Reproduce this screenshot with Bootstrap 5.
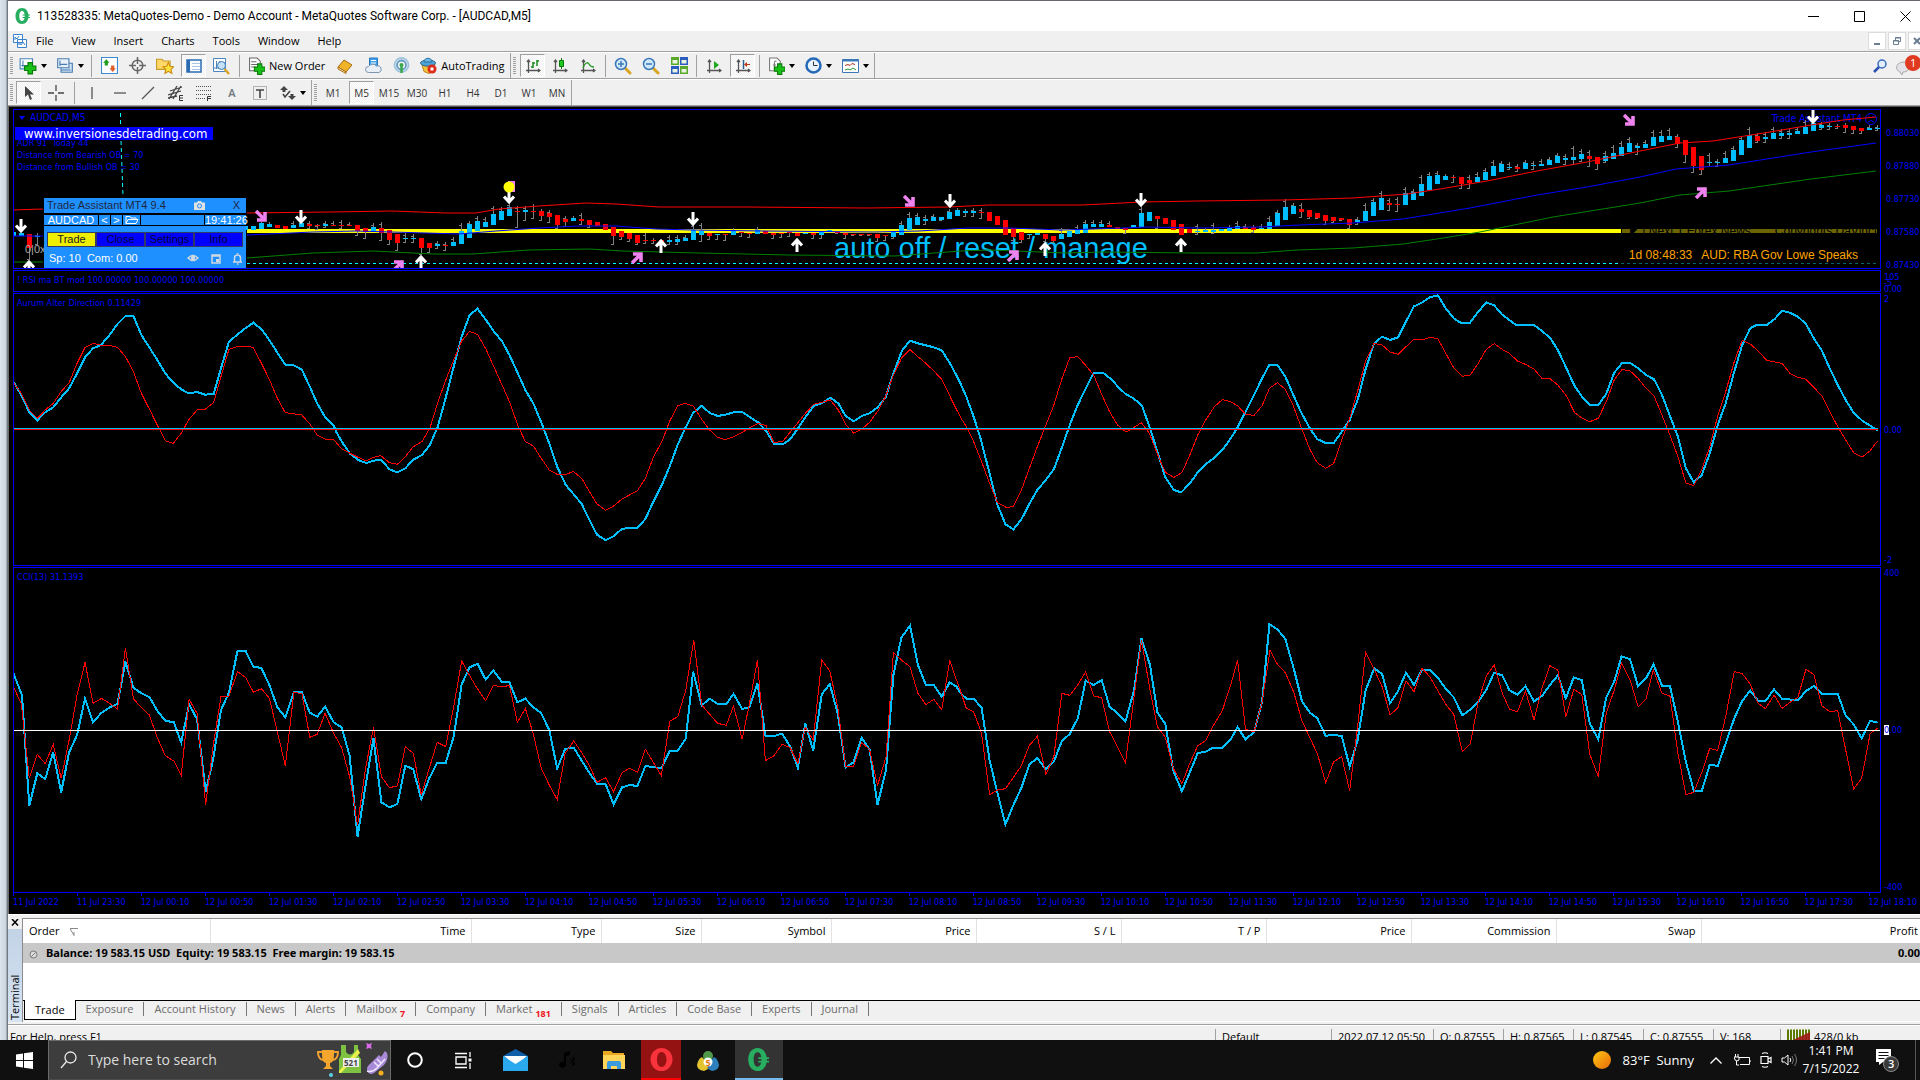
<!DOCTYPE html>
<html lang="en">
<head>
<meta charset="utf-8">
<meta name="viewport" content="width=device-width, initial-scale=1">
<title>MetaQuotes-Demo - AUDCAD,M5</title>
<link href="https://cdn.jsdelivr.net/npm/bootstrap@5.3.0/dist/css/bootstrap.min.css" rel="stylesheet">
<style>
  body{font-family:"Open Sans","Noto Sans",sans-serif;font-size:12px;line-height:16px;color:#000;background:#101010}
  button{font:inherit;color:inherit;background:none;border:0;padding:0}
  svg{display:block;flex:none}
  .ui{font-size:11px}
  .desk-edge{width:8px;background:linear-gradient(90deg,#dbe4ed,#cdd6df 70%,#6f757c 95%)}
  .app{background:#f0f0f0;border-top:1px solid #666a70;min-width:0}
  .workspace{min-height:0}
  .titlebar{height:30px;background:#fff;padding-left:7px}
  .titlebar .caption{gap:6px;font-family:Roboto,"Open Sans",sans-serif}
  .winbtn{width:46px;height:30px}
  .winbtn:last-child{margin-right:-8px}
  .menubar{height:21px;border-bottom:1px solid #a0a0a0;padding-left:5px}
  .menubar a{color:#000;text-decoration:none;padding:0 9px}
  .mdi{gap:2px;margin-right:-6px}
  .mdi button{width:18px;height:18px;background:#fff;border:1px solid #dcdcdc}
  .tb{height:27px;border-bottom:1px solid #a0a0a0;border-top:1px solid #fff}
  .tb-group{height:26px;border-right:1px solid #a0a0a0;padding-left:6px;position:relative}
  .tb-group::before{content:"";position:absolute;left:2px;top:4px;width:3px;height:18px;background:repeating-linear-gradient(#a0a0a0 0 1px,#f0f0f0 1px 2px)}
  .tb-group+.tb-group{padding-left:7px}
  .tool{width:28px;height:26px;display:flex;align-items:center;justify-content:center}
  .tool.wide{width:37px;gap:4px}
  .tool.pressed{background:conic-gradient(#fff 25%,#f0f0f0 0 50%,#fff 0 75%,#f0f0f0 0) 0 0/2px 2px;border:1px solid #a0a0a0;border-right-color:#fff;border-bottom-color:#fff;width:25px;height:23px;margin:0 1px 0 2px}
  .caret{border:3px solid transparent;border-top:4px solid #000;border-bottom:0}
  .caret.blue{border-top-color:#00f}
  .vsep{width:1px;height:22px;background:#a0a0a0;margin:0 3px}
  .tf{font-size:10px;color:#333}
  .labelled{gap:4px;padding:0 6px 0 5px}
  .chartwin{background:#000;border-left:1px solid #6d6d6d;padding:2px 0 0 4px;min-height:0;color:#00f;font:9px/12px "DejaVu Sans Condensed","DejaVu Sans",sans-serif;border-top:1px solid #555}
  .panes{gap:1px;min-height:0}
  .pane{min-height:0;flex-basis:0}
  .pane-price{flex-grow:160}
  .pane-rsi{flex-grow:22}
  .pane-aurum{flex-grow:273}
  .pane-cci{flex-grow:326}
  .plot{border:1px solid #00f;position:relative;min-width:0;min-height:0}
  .plot svg.draw{position:absolute;inset:0;width:100%;height:100%}
  .scale{width:39px;flex:none;padding-left:3px;position:relative;z-index:1;min-height:0;white-space:nowrap}
  .scale.prices{padding-top:8px}
  .scale.prices span{flex:0 0 33px;line-height:33px;padding-left:2px}
  .scale.tight{padding-top:4px}
  .scale.tight span{line-height:6px}
  .pane-title{position:absolute;left:3px;top:3px}
  .chart-head{position:absolute;left:5px;top:1px}
  .chart-head .sym{font-size:10px;line-height:14px;gap:5px}
  .site{background:#00f;color:#fff;font-size:13px;line-height:13px;width:198px;padding-left:9px;margin:2px 0 0 -4px}
  .notes{margin:-3px 0 0 -2px}
  .times{height:21px}
  .times span{flex:0 0 3.356%;white-space:nowrap;padding-top:3px;position:relative}
  .times span::before{content:"";position:absolute;left:0;top:0;width:1px;height:3px;background:#00f}
  .banner{position:absolute;left:820px;bottom:4px;font:29px/32px "Liberation Sans",Arial,sans-serif;color:#00bfff;white-space:nowrap}
  .news{position:absolute;right:22px;bottom:5px;font:12px/16px "Liberation Sans",Arial,sans-serif;color:#ffa500;gap:9px}
  .newsbar{position:absolute;right:3px;top:119px;width:255px;height:4px;background:#6b6400;color:#000;overflow:hidden;white-space:nowrap;font:12px/13px "Liberation Sans",Arial,sans-serif;padding:0 0 0 8px}
  .newsbar span{margin-top:-4px}
  .ea-name{position:absolute;right:3px;top:2px;gap:3px;font-size:10px;line-height:14px}
  .assist{position:absolute;left:30px;bottom:0;width:202px;height:70px;background:#1e90ff;font:11px/15px "Liberation Sans",Arial,sans-serif;color:#202840}
  .assist .a-title{height:15px;padding:0 6px 0 3px}
  .assist .a-row{height:13px;border:solid #000;border-width:2px 0 1px;color:#fff;line-height:10px;background:#000;gap:1px}
  .a-row>*{background:#1e90ff;height:10px;color:#fff;text-align:center}
  .a-row .pair{width:54px}
  .a-row .step{width:11px}
  .a-row .open{width:17px}
  .a-row .now{width:41px}
  .assist .a-tabs{margin-top:6px;padding:0 3px;height:15px}
  .a-tabs button{background:#00f;border:1px solid #333a66;flex:1;height:15px;line-height:13px;color:#000038}
  .a-tabs button.on{background:#eeee00;color:#222}
  .assist .a-foot{color:#fff;padding:4px 4px 0 5px}
  .terminal{height:108px;border-top:1px solid #fff}
  .term-side{width:16px;padding:4px 0 0 0}
  .term-grip{width:14px;background:linear-gradient(#d5e3f2,#c3d3e6);writing-mode:vertical-rl;transform:rotate(180deg);padding-top:2px;line-height:14px;margin-top:3px}
  .term-body{border-left:1px solid #8d8d8d;border-top:1px solid #8d8d8d;margin-top:3px;background:#fff;min-width:0}
  .term-gap{height:3px;border-bottom:1px solid #a0a0a0}
  .orders{table-layout:fixed;width:100%;border-collapse:collapse}
  .orders th{height:24px;font-weight:400;text-align:right;padding:0 5px 0 6px;border-right:1px solid #e2e2e2}
  .orders th:first-child{text-align:left}
  .orders th:last-child{border:0;padding-right:2px}
  .orders td{height:20px;background:#c8c8c8;font-family:"Noto Sans","Open Sans",sans-serif;font-weight:700;padding:0 0 0 6px}
  .c-order{width:187px}.c-time{width:261px}.c-type,.c-symbol{width:130px}.c-size{width:100px}.c-val{width:145px}
  .tabs{background:#f0f0f0;border-top:1px solid #000;height:22px;color:#6d6d6d;font-size:11px;border-bottom:1px solid #fff}
  .tabs button{padding:0 10px;height:17px;position:relative;line-height:17px}
  .tabs button+button{border-right:1px solid #777;height:14px;line-height:14px;margin-top:1px}
  .tabs button.cur{background:#fff;color:#000;border:1px solid #000;border-top:0;height:20px;margin:-1px 0 0 1px;padding:0 10px 1px}
  .tabs sub{color:#f01020;font-weight:700;font-size:9px;bottom:-4px;margin-left:3px;line-height:0}
  .status{height:15px;overflow:hidden;border-top:1px solid #fff;padding:3px 0 0 2px;font-size:11px;line-height:16px}
  .status span{border-left:1px solid #a0a0a0;padding-left:6px;height:16px;flex:none;white-space:nowrap}
  .s-profile{width:116px}.s-date{width:102px}.s-price{width:70px}.s-vol{width:67px}.s-net{width:140px}
  .taskbar{height:40px;background:#101010;color:#fff;font-size:13px}
  .task{width:48px;height:40px;display:flex;align-items:center;justify-content:center}
  .task.narrow{width:46px}
  .searchbox{width:343px;height:40px;background:#3d3d3d;border:1px solid #6b6b6b;border-bottom-color:#4a4a4a;padding:0 0 0 11px;gap:11px}
  .searchbox input{background:none;border:0;color:#e4e4e4;font-size:14px;min-width:0;outline:0;padding:0}
  .searchbox input::placeholder{color:#dcdcdc;opacity:1}
  .task.opera{width:40px;background:#941212;border-bottom:2px solid #f00}
  .task.mt5{width:54px}
  .task.mt{background:#333;border-bottom:2px solid #76b9ed}
  .clock{font-size:12px;line-height:18px;width:64px}
  .peek{width:1px;height:40px;background:#555;margin:0 4px 0 0}
</style>
<script src="https://cdn.jsdelivr.net/npm/bootstrap@5.3.0/dist/js/bootstrap.bundle.min.js"></script>
</head>
<body class="vh-100 d-flex flex-column overflow-hidden">
<svg width="0" height="0" class="position-absolute">
  <defs>
    <symbol id="logo" viewBox="0 0 16 16"><path fill="#27ae60" fill-rule="evenodd" d="M7 0c4 0 6.500 3.500 6.500 8S11 16 7 16 .5 12.500.5 8 3 0 7 0zm0 3C5 3 4.300 5.500 4.300 8S5 13 7 13s2.700-2.500 2.700-5S9 3 7 3z"/><path stroke="#27ae60" stroke-width="1.200" d="M7.500 7h7.500M7.500 9.500h7.500"/></symbol>
    <symbol id="plus" viewBox="0 0 16 16"><path fill="#18c018" stroke="#0a7a0a" d="M8 5h4v3h3v4h-3v3H8v-3H5V8h3z"/></symbol>
    <symbol id="axes" viewBox="0 0 16 16"><path fill="none" stroke="#555" stroke-width="1.300" d="M3.500 2v13M1 12.500h14M2 4l1.500-2L5 4M13 11l2 1.500-2 1.500"/></symbol>
    <symbol id="glass" viewBox="0 0 18 18"><path stroke="#d9a520" stroke-width="3" stroke-linecap="round" d="M11 11l5 5"/><circle cx="7" cy="7" r="5.500" fill="#cfe8fa" stroke="#3b78b8" stroke-width="1.500"/></symbol>
    <symbol id="down" viewBox="0 0 12 14"><path fill="none" stroke="#fff" stroke-width="3" d="M6 0v12M1 6.500l5 5.500 5-5.500"/></symbol>
    <symbol id="up" viewBox="0 0 12 14"><path fill="none" stroke="#fff" stroke-width="3" d="M6 14V2M1 7.500L6 2l5 5.500"/></symbol>
    <symbol id="se" viewBox="0 0 12 12"><path fill="none" stroke="#ee82ee" stroke-width="3.600" d="M1 1l8 8M10 2v8H2"/></symbol>
    <symbol id="ne" viewBox="0 0 12 12"><path fill="none" stroke="#ee82ee" stroke-width="3.600" d="M1 11l8-8M10 10V2H2"/></symbol>
  </defs>
</svg>

<div class="workspace d-flex flex-grow-1">
  <div class="desk-edge flex-shrink-0"></div>
  <div class="app flex-grow-1 d-flex flex-column">

    <header class="titlebar d-flex justify-content-between align-items-center">
      <div class="caption d-flex align-items-center">
        <svg width="16" height="16"><use href="#logo"/></svg>
        <span>113528335: MetaQuotes-Demo - Demo Account - MetaQuotes Software Corp. - [AUDCAD,M5]</span>
      </div>
      <div class="d-flex">
        <button class="winbtn d-flex align-items-center justify-content-center" aria-label="Minimize"><svg width="11" height="11"><path stroke="#000" d="M0 5.500h11"/></svg></button>
        <button class="winbtn d-flex align-items-center justify-content-center" aria-label="Maximize"><svg width="11" height="11"><path fill="none" stroke="#000" d="M.5.5h10v10H.5z"/></svg></button>
        <button class="winbtn d-flex align-items-center justify-content-center" aria-label="Close"><svg width="11" height="11"><path stroke="#000" d="M.5.5l10 10M10.500.5l-10 10"/></svg></button>
      </div>
    </header>

    <nav class="menubar ui d-flex align-items-center justify-content-between">
      <div class="d-flex align-items-center">
        <svg width="14" height="14" viewBox="0 0 14 14"><path fill="#fff" stroke="#3a80cc" d="M.5.5h9v8h-9zM4.500 5.500h9v8h-9z"/><path fill="none" stroke="#3a80cc" d="M2 6V3l2 2 2-3M6 11V8l2 3 2-3 2 3"/></svg>
        <a href="#">File</a><a href="#">View</a><a href="#">Insert</a><a href="#">Charts</a><a href="#">Tools</a><a href="#">Window</a><a href="#">Help</a>
      </div>
      <div class="mdi d-flex">
        <button aria-label="Minimize chart"><svg width="16" height="16"><path stroke="#6b7d92" stroke-width="2" d="M5 11h6"/></svg></button>
        <button aria-label="Restore chart"><svg width="16" height="16"><path fill="none" stroke="#6b7d92" d="M4.500 7.500h5v4h-5zM6.500 7V4.500h5v4H10M4 8h6M6 5h6"/></svg></button>
        <button aria-label="Close chart"><svg width="16" height="16"><path stroke="#6b7d92" stroke-width="2" d="M5 5l6 6M11 5l-6 6"/></svg></button>
      </div>
    </nav>

    <div class="tb ui d-flex align-items-center">
      <div class="tb-group d-flex align-items-center">
        <button class="tool wide" aria-label="New chart"><svg width="18" height="18" viewBox="0 0 16 16"><path fill="#fff" stroke="#4a86b8" d="M1 1.500h11v9H1z"/><path stroke="#4a86b8" fill="none" d="M3.500 3v6M2 7.500h8"/><use href="#plus"/></svg><i class="caret"></i></button>
        <button class="tool wide" aria-label="Profiles"><svg width="18" height="18" viewBox="0 0 16 16"><path fill="#cfe3f5" stroke="#4a7cae" d="M4.500 5.500h10v8h-10z"/><path fill="#e8f1fa" stroke="#4a7cae" d="M1.500 1.500h10v8h-10z"/><path stroke="#4a7cae" d="M3.500 3v5M3 6.500h7M5 11.500h8"/></svg><i class="caret"></i></button>
        <i class="vsep"></i>
        <button class="tool" aria-label="Market watch"><svg width="17" height="17" viewBox="0 0 16 16"><path fill="#fff" stroke="#3c8ad0" d="M.5.5h15v15H.5z"/><path fill="#1ea01e" d="M5 2l3 3.500H6.500V8h-3V5.500H2z"/><path fill="#e0602a" d="M11 14l3-3.500h-1.500V8h-3v2.500H8z"/></svg></button>
        <button class="tool" aria-label="Data window"><svg width="17" height="17" viewBox="0 0 16 16"><g fill="none" stroke="#666" stroke-width="1.400"><circle cx="8" cy="8" r="5"/><path d="M8 0v6.500M8 9.500V16M0 8h6.500M9.500 8H16"/></g></svg></button>
        <button class="tool" aria-label="Navigator"><svg width="18" height="18" viewBox="0 0 16 16"><path fill="#ffd867" stroke="#c79a28" d="M.5 2h5l1 1.500h6V11H.5z"/><path fill="#ffe23d" stroke="#c98a10" d="M11 5l1.500 3.300 3.300.4-2.500 2.300.8 3.500-3.100-1.800-3 1.800.7-3.500-2.500-2.300 3.300-.4z"/></svg></button>
        <button class="tool pressed" aria-label="Terminal"><svg width="16" height="16"><path fill="#fff" stroke="#2a6cb4" stroke-width="1.500" d="M1 2h14v12H1z"/><path fill="#2a6cb4" d="M1 2h3v12H1z"/><path stroke="#a9c6e6" d="M6 5.500h8M6 8.500h8M6 11.500h8"/></svg></button>
        <button class="tool" aria-label="Strategy tester"><svg width="18" height="18"><path fill="#fff" stroke="#4a86c0" d="M1.500 1.500h12v13h-12z"/><path stroke="#4a86c0" d="M4.500 4v8M7.500 4v3M2 11h5"/><circle cx="9.500" cy="8.500" r="4" fill="#c6e2f6" stroke="#3b78b8"/><path stroke="#d9a520" stroke-width="2.500" d="M12.500 12l4.500 5"/></svg></button>
        <i class="vsep ms-1"></i>
        <button class="labelled d-flex align-items-center"><svg width="17" height="18" viewBox="0 0 16 16"><path fill="#fff" stroke="#666" d="M1.500.5h7l3 3v9h-10z"/><path stroke="#666" d="M3 4h5M3 6.500h6M3 9h4"/><use href="#plus" x="1" y="1"/></svg><span>New Order</span></button>
        <button class="tool" aria-label="MetaEditor"><svg width="16" height="16"><path fill="#f0b429" stroke="#a86c10" d="M1 9l6-7 8 5-6 7z"/><path fill="#fff3c0" stroke="#a86c10" d="M1 9l8 5v1.500L1 11z"/></svg></button>
        <button class="tool" aria-label="Community"><svg width="17" height="17"><path fill="#3f9fe8" stroke="#2a78bd" d="M4.500 1h8v8h-8z"/><path stroke="#fff" d="M6 3.500h5M6 6h5"/><path fill="#e8eef5" stroke="#7d95b0" d="M3.500 15.500a3 3 0 010-6 4.500 3.500 0 018-.5 3 3 0 012.500 6.500z"/></svg></button>
        <button class="tool" aria-label="Signals"><svg width="17" height="17"><g fill="none" stroke-width="1.800"><circle cx="8.500" cy="8" r="7" stroke="#9fc4de"/><circle cx="8.500" cy="8" r="4.500" stroke="#5f9ac4"/></g><circle cx="8.500" cy="8" r="2" fill="#3aa84a"/><path stroke="#3aa84a" stroke-width="2.500" d="M8.500 9v7"/></svg></button>
        <button class="labelled d-flex align-items-center"><svg width="17" height="17"><path fill="#f3c33c" stroke="#b98416" d="M2 8l6 2 7-3-2 7-4 2.500-5-2z"/><ellipse cx="8" cy="6" rx="7.500" ry="3" fill="#4fa4d8" stroke="#2a6d9d"/><path fill="#69b9e6" stroke="#2a6d9d" d="M4 5c0-5 8-5 8 0z"/><circle cx="12" cy="12" r="4.500" fill="#de2a1a"/><path fill="#fff" d="M10.500 10.500h3v3h-3z"/></svg><span>AutoTrading</span></button>
      </div>
      <div class="tb-group d-flex align-items-center">
        <button class="tool pressed" aria-label="Bar chart"><svg width="16" height="16"><use href="#axes"/><path stroke="#1a8a1a" stroke-width="1.500" fill="none" d="M8 10V4M8 5h2M6 9h2M12 8V2M12 3h2"/></svg></button>
        <button class="tool" aria-label="Candlesticks"><svg width="16" height="16"><use href="#axes"/><path stroke="#0a7a0a" d="M9.500 0v11"/><path fill="#1fc81f" stroke="#0a7a0a" d="M7.500 2.500h4v6h-4z"/></svg></button>
        <button class="tool" aria-label="Line chart"><svg width="16" height="16"><use href="#axes"/><path stroke="#2a9a2a" stroke-width="1.300" fill="none" d="M3 10c2-6 5-6 6-4s3 3 5 3"/></svg></button>
        <i class="vsep"></i>
        <button class="tool" aria-label="Zoom in"><svg width="18" height="18"><use href="#glass"/><path stroke="#3b78b8" stroke-width="1.500" d="M4 7h6M7 4v6"/></svg></button>
        <button class="tool" aria-label="Zoom out"><svg width="18" height="18"><use href="#glass"/><path stroke="#3b78b8" stroke-width="1.500" d="M4 7h6"/></svg></button>
        <button class="tool" aria-label="Tile windows"><svg width="17" height="17"><path fill="#58a82a" d="M0 0h8v8H0zM9 9h8v8H9z"/><path fill="#2a5cc0" d="M9 0h8v8H9zM0 9h8v8H0z"/><path fill="#e8f4e0" d="M1.500 3h5v3.500h-5zM10.500 3h5v3.500h-5zM1.500 12h5v3.500h-5zM10.500 12h5v3.500h-5z"/></svg></button>
        <i class="vsep"></i>
        <button class="tool" aria-label="Auto scroll"><svg width="16" height="16"><use href="#axes"/><path fill="#1fa81f" d="M8 3l5 4-5 4z"/></svg></button>
        <button class="tool pressed" aria-label="Chart shift"><svg width="16" height="16"><use href="#axes"/><path stroke="#2a6090" stroke-width="1.500" d="M8.500 2v9"/><path fill="#c03a10" d="M9 6.500L12 4v2h3v1h-3v2z"/></svg></button>
        <i class="vsep"></i>
        <button class="tool wide" aria-label="Indicators"><svg width="17" height="18" viewBox="0 0 16 16"><path fill="#fff" stroke="#777" d="M1.500.5h7l3 3v9h-10z"/><path stroke="#777" fill="none" d="M6 11V5q0-2 2-1.500M4.500 7h3"/><use href="#plus" x="1" y="1"/></svg><i class="caret"></i></button>
        <button class="tool wide" aria-label="Periods"><svg width="17" height="17"><circle cx="8.500" cy="8.500" r="7" fill="#eaf3fb" stroke="#2468b8" stroke-width="2.500"/><path fill="none" stroke="#333" d="M8.500 4.500v4h4"/></svg><i class="caret"></i></button>
        <button class="tool wide" aria-label="Templates"><svg width="17" height="16"><path fill="#fff" stroke="#3c78b8" d="M.5 1.500h16v13H.5z"/><path fill="#3c78b8" d="M.5 1.500h16v2H.5z"/><path stroke="#a83018" fill="none" d="M3 7.500l3-1 2 1 2-2 3 1"/><path stroke="#2a9a2a" fill="none" d="M3 12l3-1 2 1 3-2 3 2"/></svg><i class="caret"></i></button>
      </div>
      <div class="ms-auto d-flex position-relative">
        <button class="tool ps-1" aria-label="Search"><svg width="14" height="14"><circle cx="9" cy="5" r="4" fill="#e3effb" stroke="#3a6cc0" stroke-width="1.500"/><path stroke="#2a50b0" stroke-width="2.500" d="M6 8l-5 5"/></svg></button>
        <button class="tool" aria-label="Messages"><svg width="28" height="26"><path fill="#e2e2e8" stroke="#aaa" d="M10 22l-2-3c-5-2-5-9 3-10s9 10 0 10z"/><circle cx="21" cy="10" r="8" fill="#e03a20"/><text x="18" y="14" font-size="11" fill="#fff">1</text></svg></button>
      </div>
    </div>

    <div class="tb ui d-flex align-items-center">
      <div class="tb-group d-flex align-items-center">
        <button class="tool pressed" aria-label="Cursor"><svg width="12" height="16"><path fill="#444" d="M2 1v11l3-2.500L7 15l2-1-2-4.500h4z"/></svg></button>
        <button class="tool" aria-label="Crosshair"><svg width="16" height="16"><path stroke="#444" stroke-width="1.300" d="M8 0v6M8 10v6M0 8h6M10 8h6"/></svg></button>
        <i class="vsep ms-1"></i>
        <button class="tool" aria-label="Vertical line"><svg width="14" height="14"><path stroke="#555" stroke-width="1.300" d="M7 1v12"/></svg></button>
        <button class="tool" aria-label="Horizontal line"><svg width="14" height="14"><path stroke="#555" stroke-width="1.300" d="M1 7h12"/></svg></button>
        <button class="tool" aria-label="Trendline"><svg width="14" height="14"><path stroke="#555" stroke-width="1.300" d="M1 13L13 1"/></svg></button>
        <button class="tool" aria-label="Channel"><svg width="16" height="16"><path stroke="#444" stroke-width="1.300" d="M1 14L9 1M5 14L13 1M0 10l13-4M2 6l12-4M0 13l9-2"/><path fill="none" stroke="#333" d="M15 10.500h-3.500v5H15M12 13h3"/></svg></button>
        <button class="tool" aria-label="Fibonacci"><svg width="16" height="16"><path stroke="#555" stroke-dasharray="1 1" d="M0 1.500h15M0 5.500h15M0 9.500h15M0 13.500h10"/><path fill="none" stroke="#333" d="M11.500 16v-4.500H15M12 13.500h3"/></svg></button>
        <button class="tool fw-semibold text-secondary fs-6" aria-label="Text"><span class="ui">A</span></button>
        <button class="tool" aria-label="Text label"><svg width="14" height="14"><path fill="none" stroke="#777" stroke-dasharray="1 1" d="M.5.5h13v13H.5z"/><path stroke="#444" stroke-width="1.600" d="M3 4h8M7 4v8"/></svg></button>
        <button class="tool wide" aria-label="Arrows"><svg width="16" height="14"><path fill="#444" d="M4 0l4 4H5.500v2h-3V4H0zM12 14l-4-4h2.500V8h3v2H16z"/><path stroke="#444" stroke-width="1.600" fill="none" d="M3 8l2 3 5-6"/></svg><i class="caret"></i></button>
      </div>
      <div class="tb-group d-flex align-items-center">
        <button class="tool tf">M1</button><button class="tool tf pressed">M5</button><button class="tool tf">M15</button><button class="tool tf">M30</button><button class="tool tf">H1</button><button class="tool tf">H4</button><button class="tool tf">D1</button><button class="tool tf">W1</button><button class="tool tf">MN</button>
      </div>
    </div>

    <main class="chartwin flex-grow-1 d-flex flex-column">
      <div class="panes flex-grow-1 d-flex flex-column">
        <section class="pane pane-price d-flex">
          <div class="plot flex-grow-1 overflow-hidden">
            <div class="chart-head">
              <div class="sym d-flex align-items-center"><i class="caret blue"></i><span>AUDCAD,M5</span></div>
              <div class="site">www.inversionesdetrading.com</div>
              <div class="notes">ADR 91&nbsp; Today 44<br>Distance from Bearish OB = 70<br>Distance from Bullish OB = 30</div>
            </div>
            <div class="newsbar d-flex gap-4"><span>◤ | Next 1 Forex News</span><span>Copyrights DaVinci</span></div>
            <div class="ea-name d-flex align-items-center"><span>Trade Assistant MT4</span><svg width="12" height="12"><circle cx="6" cy="6" r="5.500" fill="none" stroke="#00f"/><path fill="none" stroke="#00f" d="M3 4h2M7 4h2M3 9q3-3 6 0"/></svg></div>
            <div class="banner">auto off / reset / manage</div>
            <svg class="draw" viewBox="14 110 1866 158" preserveAspectRatio="none" id="price">
              <path stroke="#0ff" stroke-dasharray="4 3" fill="none" d="M120.500 113v13M121 141l2 55"/>
              <path fill="#ff0" d="M247 229h1374v4H247z"/>
              <path stroke="#0ff" stroke-dasharray="3 3" d="M247 263.500h1374"/><path stroke="#066" stroke-dasharray="3 3" d="M1621 263.500h256"/>
              <g id="candles"></g>
              <g fill="none">
                <path stroke="red" d="M13 210L43 209M247 213L329 212 392 211 446 213 476 213 499 209 539 206 586 203 616 204 659 207 746 207 866 208 948 207 989 205 1082 205 1142 202 1197 201 1283 200 1353 198 1407 194 1440 189 1487 181 1537 171 1587 162 1640 151 1680 143 1713 141 1770 132 1811 125 1843 120 1876 117"/>
                <path stroke="blue" d="M13 236H43M247 235L313 232 356 231 426 233 459 234 496 231 539 228 579 226 616 226 656 229 693 230 763 231 874 232 919 231 968 228 1009 228 1062 230 1123 228 1148 227 1197 228 1260 227 1300 225 1353 223 1403 219 1470 208 1537 195 1587 187 1640 177 1676 169 1729 165 1811 152 1876 143"/>
                <path stroke="green" d="M13 262H43M247 258L313 253 373 251 433 254 473 254 529 250 589 249 623 251 699 253 789 255 895 256 960 251 989 250 1066 253 1103 252 1193 253 1257 253 1297 250 1353 248 1403 244 1437 239 1480 232 1553 217 1640 203 1680 195 1729 191 1811 179 1876 171"/>
              </g>
              <g id="marks"></g>
            </svg>
            <div class="news d-flex"><span>1d 08:48:33</span><span>AUD: RBA Gov Lowe Speaks</span></div>
            <div class="assist">
              <div class="a-title d-flex align-items-center"><span class="flex-grow-1">Trade Assistant MT4 9.4</span><svg width="11" height="9" class="me-4"><path fill="#e0e0e0" d="M0 1.500h3L4 0h3l1 1.500h3V9H0z"/><circle cx="5.500" cy="5" r="2" fill="none" stroke="#1e90ff"/></svg><span class="ms-1">X</span></div>
              <div class="a-row d-flex"><button class="pair">AUDCAD</button><button class="step">&lt;</button><button class="step">&gt;</button><button class="open" aria-label="Open"><svg width="17" height="10"><path fill="none" stroke="#fff" d="M3 8.500V1.500h4l1 1.500h5v1.500M3 8.500l2-4h10l-2 4z"/></svg></button><span class="flex-grow-1"></span><span class="now">19:41:26</span></div>
              <div class="a-tabs d-flex"><button class="on">Trade</button><button>Close</button><button>Settings</button><button>Info</button></div>
              <div class="a-foot d-flex align-items-center"><span class="flex-grow-1">Sp: 10&nbsp; Com: 0.00</span>
                <svg width="55" height="12"><g fill="none" stroke="#d0d8e0" stroke-width="1.500"><path d="M1 5q5-5 10 0q-5 5-10 0z"/><circle cx="6" cy="5" r="1.500" fill="#d0d8e0"/><path d="M25 2h8v8h-8zM25 3h8"/><path d="M46 9h9M47.500 9V5a3 3 0 016 0v4M50.500 0v1M50 11h1.500"/></g><path fill="#d0d8e0" d="M29 6h3v3h-3z"/></svg></div>
            </div>
          </div>
          <div class="scale prices d-flex flex-column"><span>0.88030</span><span>0.87880</span><span>0.87730</span><span>0.87580</span><span>0.87430</span></div>
        </section>
        <section class="pane pane-rsi d-flex">
          <div class="plot flex-grow-1"><div class="pane-title">! RSI ma BT mod 100.00000 100.00000 100.00000</div></div>
          <div class="scale tight d-flex flex-column overflow-hidden"><span>105</span><span>-5</span><span>0.00</span></div>
        </section>
        <section class="pane pane-aurum d-flex">
          <div class="plot flex-grow-1">
            <div class="pane-title">Aurum Alter Direction 0.11429</div>
            <svg class="draw" viewBox="23 102 3047 813" preserveAspectRatio="none" id="aurum"></svg>
          </div>
          <div class="scale d-flex flex-column justify-content-between"><span>2</span><span>0.00</span><span>-2</span></div>
        </section>
        <section class="pane pane-cci d-flex">
          <div class="plot flex-grow-1">
            <div class="pane-title">CCI(13) 31.1393</div>
            <svg class="draw" viewBox="23 24 3047 972" preserveAspectRatio="none" id="cci"></svg>
          </div>
          <div class="scale d-flex flex-column justify-content-between"><span>400</span><span><b class="bg-white fw-normal">0</b>.00</span><span>-400</span></div>
        </section>
      </div>
      <div class="times d-flex overflow-hidden" id="times"></div>
    </main>

    <section class="terminal ui d-flex">
      <div class="term-side d-flex flex-column">
        <button aria-label="Close terminal"><svg width="14" height="7"><path stroke="#000" stroke-width="1.500" d="M4 0l6 6.500M10 0L4 6.500"/></svg></button>
        <div class="term-grip flex-grow-1">Terminal</div>
      </div>
      <div class="term-body flex-grow-1 d-flex flex-column">
        <table class="orders">
          <colgroup><col class="c-order"><col class="c-time"><col class="c-type"><col class="c-size"><col class="c-symbol"><col class="c-val"><col class="c-val"><col class="c-val"><col class="c-val"><col class="c-val"><col class="c-val"><col></colgroup>
          <thead><tr><th><span class="me-2">Order</span> <svg class="d-inline" width="8" height="8"><path fill="none" stroke="#888" d="M0 .5h8M0 .5l4 7V4"/></svg></th><th>Time</th><th>Type</th><th>Size</th><th>Symbol</th><th>Price</th><th>S / L</th><th>T / P</th><th>Price</th><th>Commission</th><th>Swap</th><th>Profit</th></tr></thead>
          <tbody><tr><td colspan="11"><svg class="d-inline me-2" width="9" height="9"><circle cx="4.500" cy="4.500" r="3.500" fill="#ddd" stroke="#777"/><path stroke="#777" d="M2.500 6.500l4-4"/></svg>Balance: 19 583.15 USD&nbsp; Equity: 19 583.15&nbsp; Free margin: 19 583.15</td><td class="text-end">0.00</td></tr></tbody>
        </table>
        <div class="tabs d-flex mt-auto">
          <button class="cur">Trade</button><button>Exposure</button><button>Account History</button><button>News</button><button>Alerts</button><button>Mailbox<sub>7</sub></button><button>Company</button><button>Market<sub>181</sub></button><button>Signals</button><button>Articles</button><button>Code Base</button><button>Experts</button><button>Journal</button>
        </div>
      </div>
    </section>
    <div class="term-gap"></div>
    <footer class="status d-flex">
      <div class="flex-grow-1">For Help, press F1</div>
      <span class="s-profile">Default</span><span class="s-date">2022.07.12 05:50</span><span class="s-price">O: 0.87555</span><span class="s-price">H: 0.87565</span><span class="s-price">L: 0.87545</span><span class="s-price">C: 0.87555</span><span class="s-vol">V: 168</span><span class="s-net d-flex gap-1"><svg width="23" height="12"><path stroke="#5a7a00" stroke-width="11" stroke-dasharray="2 1" d="M0 6h23"/><path fill="#a01818" opacity=".9" d="M4 12L23 3v9z"/></svg>428/0 kb</span>
    </footer>
  </div>
</div>

<footer class="taskbar d-flex align-items-center flex-shrink-0">
  <button class="task" aria-label="Start"><svg width="17" height="17"><path fill="#fff" d="M0 2.500l7-1V8H0zM8 1.300L17 0v8H8zM0 9h7v6.500l-7-1zM8 9h9v8l-9-1.300z"/></svg></button>
  <div class="searchbox d-flex align-items-center">
    <svg width="17" height="18"><circle cx="10.500" cy="6.500" r="5.500" fill="none" stroke="#e8e8e8" stroke-width="1.300"/><path stroke="#e8e8e8" stroke-width="1.300" d="M6.500 10.500L1 17"/></svg>
    <input type="text" class="flex-grow-1" placeholder="Type here to search" aria-label="Type here to search">
    <svg width="73" height="38" viewBox="0 0 73 38"><path fill="#f4a72c" d="M5 9h12v5q0 7-4 8v3l3 3H6l3-3v-3q-4-1-4-8z"/><path fill="none" stroke="#f0a030" stroke-width="2" d="M5 11H1q0 7 5 8M17 11h4q0 7-5 8"/><path fill="#7fc242" d="M24 4h5v7q4 5 8 0V4h4v10l3 4v14H22V18l2-4z"/><path fill="#e8f04a" d="M22 30L41 8l2 4L24 32h-2z"/><path fill="#eee" d="M26 17h16v9H26z"/><text x="27" y="25" font-size="8" font-weight="700" fill="#444">521</text><path fill="#a98ad8" d="M50 28q0-3 4-6l8-8 2 2 4-6 2 2q2 6-3 12l-10 8q-6 3-7-4z"/><path fill="none" stroke="#efe8ff" stroke-width="1.500" d="M50 30q5 2 10-3l8-9M57 21l4 4M60 18l4 4"/><path fill="#d86ae8" d="M49 2l3 1 3-1-1 3 1 3-3-1-3 1 1-3z"/><circle cx="14" cy="34" r="2" fill="#5ad0e8"/><circle cx="64" cy="32" r="2.500" fill="#f0b020"/></svg>
  </div>
  <button class="task" aria-label="Cortana"><svg width="18" height="18"><circle cx="9" cy="9" r="6.800" fill="none" stroke="#fff" stroke-width="2"/></svg></button>
  <button class="task" aria-label="Task view"><svg width="17" height="17"><g fill="none" stroke="#fff" stroke-width="1.300"><path d="M1 5h10v7H1zM0 1.500h12M0 15.500h12M15 0v5M15 11v6"/></g><path fill="#fff" d="M13.500 6.500h3v3h-3z"/></svg></button>
  <button class="task ms-1" aria-label="Mail"><svg width="25" height="22" viewBox="0 0 25 22"><path fill="#0f5ea8" d="M0 7L12.500 0 25 7v4H0z"/><path fill="#fff" d="M1 7h23l-9 8h-5z"/><path fill="#2aa9ee" d="M0 7l12.500 8L25 7v15H0z"/></svg></button>
  <button class="task ms-1" aria-label="Music"><svg width="18" height="18"><path fill="#000" d="M6 2l6-2v4L8 5v9a3.500 3 0 11-2-3z"/><path stroke="#000" fill="none" d="M12 8l5 5-2 2V6l2 2-5 5"/></svg></button>
  <button class="task narrow" aria-label="File Explorer"><svg width="22" height="18"><path fill="#e8a820" d="M0 0h8l2 2h11v4H0z"/><path fill="#ffd65a" d="M0 4h22v14H0z"/><path fill="#3a9ae0" d="M4 18v-6q0-2 2-2h10q2 0 2 2v6h-4v-3H8v3z"/></svg></button>
  <button class="task opera ms-1" aria-label="Opera"><svg width="23" height="23"><path fill="#f8333c" fill-rule="evenodd" d="M11.500 0a11 11.500 0 010 23 11 11.500 0 010-23zm0 4c-3 0-4.500 3.500-4.500 7.500s1.500 7.500 4.500 7.500 5-3.500 5-7.500-2-7.500-5-7.500z"/></svg></button>
  <button class="task mt5" aria-label="MetaTrader 5"><svg width="22" height="21"><circle cx="11" cy="6" r="5" fill="#4f9a4a"/><path fill="#e3c32e" d="M5 7l5 6 1 6-4 2q-7-1-7-6 1-6 5-8z"/><path fill="#2d80bd" d="M17 7l-5 6-1 6 4 2q7-1 7-6-1-6-5-8z"/><circle cx="11" cy="12" r="4.500" fill="#fff"/><text x="8.500" y="15.500" font-size="9" font-weight="700" fill="#e07a10">5</text></svg></button>
  <button class="task mt" aria-label="Trading terminal"><svg width="24" height="23"><use href="#logo"/></svg></button>
  <div class="ms-auto d-flex align-items-center">
    <svg width="18" height="18" class="me-2"><defs><linearGradient id="sun" x2="1" y2="1"><stop stop-color="#ffc814"/><stop offset="1" stop-color="#e86a08"/></linearGradient></defs><circle cx="9" cy="9" r="9" fill="url(#sun)"/></svg>
    <span class="ms-1">83°F&nbsp; Sunny</span>
    <div class="d-flex align-items-center ms-3 gap-2">
      <svg width="12" height="7"><path fill="none" stroke="#fff" stroke-width="1.300" d="M.5 6.500L6 1l5.500 5.500"/></svg>
      <svg width="17" height="12" class="ms-1"><path fill="none" stroke="#fff" d="M5 3.500h10.500v7H6M16 6v2M0 3h5v3q-2 2-4 0zM1.500 0v3M4 0v3M2.500 7v4H5"/></svg>
      <svg width="14" height="16"><path fill="none" stroke="#fff" stroke-width="1.200" d="M2 4.500h7v7H2zM9 7l3-1.500v5L9 9M3 1.500q3-1.500 6 0M3 14.500q3 1.500 6 0"/></svg>
      <svg width="18" height="14"><path fill="none" stroke="#fff" d="M1 5h2.500L7 2v10L3.500 9H1zM9 5q1.500 2 0 4"/><path fill="none" stroke="#777" d="M11 3q3 4 0 8M13.500 1q4 6 0 12"/></svg>
    </div>
    <div class="clock text-center">1:41 PM<br>7/15/2022</div>
    <button class="task" aria-label="Notifications"><svg width="26" height="26"><path fill="#fff" d="M2 2h15v13H9l-4 3v-3H2z"/><path stroke="#101010" stroke-width="1.200" d="M4.500 5.500h10M4.500 8.500h10M4.500 11.500h6"/><circle cx="17" cy="17" r="7.500" fill="#3a3a3a" stroke="#888"/><text x="14" y="21" font-size="11" fill="#fff" font-weight="600">3</text></svg></button>
    <i class="peek ms-1"></i>
  </div>
</footer>

<script>
  const NS = 'http://www.w3.org/2000/svg';
  const add = (parent, tag, attrs) => {
    const el = document.createElementNS(NS, tag);
    for (const k in attrs) el.setAttribute(k, attrs[k]);
    return parent.appendChild(el);
  };

  // Candles: direction, body top, body bottom, high, low ("-" = same as the body), in thirds of a pixel from the base
  const blocks = [
    {first:0, base:0, rows:'u 696 708 - -|u 699 708 - -|d 702 745 - 780|u 708 712 698 735'},
    {first:29, base:540, rows:'u 138 150 - -|u 138 150 - -|u 130 147 125 -|u 131 140 126 -|d 135 144 - -|d 138 147 - -|u 134 144 123 -|u 128 140 - -|d 131 138 123 146|d 135 137 133 150|u 131 137 123 145|d 134 137 123 -|d 134 137 120 147|d 134 138 126 -|d 135 153 - 167|d 144 157 - 177|u 141 153 130 -|d 144 159 126 182|d 150 180 - 196|d 162 189 - 212|u 174 177 158 190|u 174 177 162 188|d 174 204 - 225|d 189 204 - 218|u 192 197 183 208|d 194 197 186 212|u 186 198 170 -|u 153 192 130 -|u 132 174 124 -|u 123 153 108 -|u 126 141 112 -|u 102 135 78 -|u 93 120 82 -|u 81 108 70 -|d 93 97 78 143|u 90 96 78 124|d 93 95 72 116|d 93 108 88 124|d 99 111 90 130|d 105 135 - 146|d 117 125 108 140|u 114 123 108 -|d 117 123 98 134|d 120 135 - 145|d 126 138 - -|d 132 150 - -|d 141 168 - 194|d 153 171 - 180|d 159 177 - 186|d 165 189 - 194|d 180 183 158 192|d 180 184 175 192|d 180 192 - 198|u 180 186 166 194|u 178 186 166 196|u 174 183 166 -|u 150 180 132 -|u 153 165 130 186|d 159 168 - 180|u 162 165 - 180|d 161 164 - 182|u 153 165 145 -|d 156 160 - 172|d 158 162 - 174|u 150 162 142 -'},
    {first:94, base:0, rows:'d 694 703 - -|d 699 705 - 717|d 699 702 - 714|d 697 700 - 711|d 698 707 - -|u 700 703 - -|d 700 704 - 718|u 696 706 - 716|u 690 697 - -|d 696 699 - 703|d 699 705 - 718|d 701 704 - 709|d 702 705 - 709|d 702 705 - 709|d 702 713 - 727|d 704 709 - 722|u 694 711 - 717|u 676 705 664 -|u 654 690 636 -|u 652 675 640 -|u 656 663 646 675|u 652 662 642 -|u 652 659 - 662|u 636 657 626 -|u 629 647 624 -|u 634 638 627 652|u 634 638 624 650|d 636 640 624 656|d 636 662 - -|d 648 676 - -|d 660 705 - -|d 684 712 - 724|d 696 719 - 730|u 702 706 - 717|u 700 706 - -|d 702 716 - 726|d 708 722 - 730|u 702 716 684 -|u 692 710 - -|u 688 701 675 -|u 672 698 660 -|u 672 682 660 -|u 673 681 660 -|d 675 682 663 -|d 680 688 - -|d 684 690 - 702|u 675 684 - -|u 639 681 620 -|u 636 662 - -|d 648 658 - 686|d 654 672 - -|d 660 690 - -|d 672 705 - -|d 688 700 - -'},
    {first:148, base:330, rows:'u 362 366 343 376|u 360 366 353 -|u 360 366 340 372|u 358 364 - -|u 352 362 346 -|u 348 358 334 -|d 352 356 343 -|d 352 360 346 370|u 354 358 343 -|u 336 356 318 -|u 309 348 300 -|u 291 330 267 -|u 288 312 280 -|d 297 306 280 325|d 300 321 - 326|d 309 323 - 328|d 315 333 - 346|d 321 333 - 338|d 324 330 - 334|d 327 345 - 356|u 330 336 320 345|u 303 333 280 -|u 276 318 264 -|u 264 300 244 -|d 279 285 265 303|d 282 286 262 305|u 249 285 230 -|u 246 270 238 -|u 222 258 196 -|u 198 240 187 -|u 195 222 184 -|u 198 210 193 -|d 201 204 195 220|d 201 222 - 236|d 210 220 196 236|u 201 216 187 -|u 186 210 174 -|u 168 198 151 -|u 162 186 154 -|u 171 174 156 181|d 171 177 163 186|u 159 177 151 -|u 165 168 154 180|u 162 168 148 -|u 150 165 140 -|u 138 159 130 -|u 144 150 132 164|u 141 150 109 164|u 132 147 118 156|d 138 147 119 170|d 141 162 - 180|u 138 153 124 158|u 129 147 104 -|u 111 138 92 -|u 99 126 82 -|u 108 114 100 134'},
    {first:204, base:0, rows:'u 432 444 420 -|u 411 438 390 -|u 408 426 390 -|u 408 420 385 -|d 411 432 402 444|d 420 465 - 488|d 441 497 - 518|d 468 510 - 524|u 486 489 460 500|u 486 489 476 502|u 474 489 454 -|u 450 483 438 -|u 420 465 408 -|u 405 444 380 -|d 408 423 400 430|u 412 417 396 430|u 399 417 380 -|u 398 408 386 416|u 399 404 386 416|u 393 402 380 -|u 381 402 360 -|u 369 393 362 -|u 375 384 366 390|u 378 382 370 390|d 378 382 372 386|d 376 384 370 398|d 378 391 - 402|d 384 393 - 402|u 384 390 376 -|u 383 387 374 392'}
  ];
  const candles = document.getElementById('candles');
  for (const b of blocks) b.rows.split('|').forEach((row, n) => {
    const [dir, t, m, h, l] = row.split(' ');
    const px = v => (b.base + +v) / 3, x = 11 + 8 * (b.first + n);
    const hi = Math.round(px(h === '-' ? t : h)), lo = Math.round(px(l === '-' ? m : l));
    const top = Math.round(px(t)), bot = Math.max(top + 1, Math.round(px(m)));
    let d = `M${x + 2.5} ${hi}V${lo}`;
    if (h !== '-') d += `M${x + 2} ${hi + 2.5}h-2`;
    if (l !== '-') d += `M${x + 2} ${lo - .5}h-2`;
    add(candles, 'path', {d, stroke: '#808080', fill: 'none'});
    add(candles, 'rect', {x, y: top, width: 5, height: bot - top, fill: dir === 'u' ? '#00bfff' : '#f00'});
  });

  // Signal arrows: symbol, centre x, top y
  const marks = document.getElementById('marks');
  [['down',21,219],['up',29,260],['down',301,210],['down',509,190],['down',693,212],['down',950,194],['down',1141,193],['down',1813,110],
   ['up',421,255],['up',661,239],['up',797,238],['up',1045,242],['up',1181,238],
   ['se',261,210],['se',909,195],['se',1629,114],['ne',398,260],['ne',637,252],['ne',1013,250],['ne',1701,187]]
   .forEach(([id, cx, y]) => add(marks, 'use', {href: '#' + id, x: cx - 6, y, width: 12, height: id.length > 2 || id === 'up' ? 14 : 12}));
  add(marks, 'rect', {x: 508, y: 181, width: 7, height: 11, fill: '#ee82ee'});
  add(marks, 'ellipse', {cx: 509, cy: 187, rx: 5.5, ry: 5.5, fill: '#ff0'});
  const lots = add(marks, 'text', {x: 25, y: 253, fill: '#aaa', 'font-size': 11, 'font-family': 'Liberation Sans'});
  lots.textContent = '0|0x';

  // Oscillators: each series comes in two halves, the second one starting at x = 1568
  const series = {
    aurum: [
      ['#00bfff', 2, '22,365 35,405 48,457 61,481 74,457 87,442 100,412 113,385 126,340 139,292 152,265 165,255 179,225 192,192 205,168 218,168 231,225 244,262 257,300 270,340 283,368 296,388 308,400 322,396 335,404 349,402 361,325 374,245 387,225 400,206 414,188 427,208 440,240 453,278 466,314 480,316 493,329 506,380 518,430 532,474 545,497 549,515 560,550 572,582 585,600 598,609 610,602 623,600 636,628 649,637 662,625 675,599 689,585 702,555 715,500 727,420 741,320 754,230 767,165 780,146 793,178 806,213 820,244 832,285 845,337 858,390 871,430 884,487 897,550 910,620 924,675 937,703 950,732 962,778 975,824 989,841 1002,829 1016,806 1041,803 1054,777 1067,725 1082,670 1094,618 1107,553 1119,505 1132,459 1146,437 1159,459 1172,468 1185,464 1198,457 1212,456 1225,472 1238,487 1251,512 1264,552 1279,552 1291,537 1303,505 1316,470 1329,438 1342,430 1356,413 1369,430 1381,468 1394,484 1407,468 1420,460 1433,442 1446,413 1459,340 1473,272 1486,242 1499,250 1525,262 1538,271 1553,315',
        '0,368 10,410 22,470 34,540 48,640 61,735 74,793 87,808 100,778 113,732 126,690 139,662 153,628 166,563 179,495 192,435 205,385 218,339 234,339 248,360 257,379 270,402 283,415 297,437 310,505 322,575 335,652 349,690 361,697 375,670 388,637 401,613 414,595 428,570 440,540 453,502 466,455 480,405 493,355 505,314 518,314 531,350 544,405 557,458 571,505 583,537 597,549 610,549 622,518 636,480 649,420 662,328 676,250 689,230 702,240 715,232 728,185 741,139 754,128 767,112 780,106 793,145 806,175 818,189 832,189 845,158 859,127 872,136 885,164 908,195 937,195 950,213 963,233 976,270 990,325 1003,377 1016,412 1028,435 1042,435 1055,402 1068,338 1081,309 1094,309 1107,325 1120,345 1133,358 1146,405 1159,468 1172,530 1185,625 1198,667 1211,645 1224,580 1237,495 1250,430 1264,335 1277,255 1290,205 1300,195 1317,195 1330,177 1342,152 1355,158 1368,170 1381,192 1394,235 1407,272 1420,325 1433,375 1446,420 1459,458 1473,482 1486,497 1498,512'],
      ['#f00', 1, '22,368 35,400 48,450 61,475 74,450 87,430 100,395 113,368 126,310 139,262 152,250 165,256 180,257 192,262 205,290 218,335 231,400 244,447 257,495 270,542 283,550 296,520 308,480 322,450 335,448 349,428 361,350 374,268 387,260 408,260 414,263 427,310 440,358 453,415 466,458 493,465 506,492 518,525 532,538 545,539 558,566 572,580 585,592 598,603 610,592 622,587 636,608 649,613 662,590 675,560 689,545 702,505 715,428 727,365 741,300 754,243 767,214 780,224 793,265 806,318 820,375 832,425 845,493 858,545 871,558 884,595 897,630 910,643 923,645 936,634 950,655 962,693 975,732 989,751 1002,738 1016,717 1041,692 1054,655 1067,592 1082,540 1094,482 1107,437 1119,430 1132,438 1146,478 1159,510 1172,532 1185,539 1198,530 1212,517 1225,503 1238,490 1251,497 1264,548 1279,543 1291,515 1303,488 1316,458 1329,433 1356,420 1369,450 1381,493 1394,519 1407,508 1420,487 1433,455 1446,410 1459,345 1473,292 1486,269 1499,290 1512,310 1525,333 1538,358 1553,415',
        '0,470 10,500 22,545 35,605 48,670 61,728 76,743 87,739 100,690 113,625 126,560 139,500 153,435 166,357 179,293 192,290 205,316 218,345 231,403 244,455 257,495 271,516 284,502 296,488 309,520 322,582 335,637 349,652 362,638 375,585 388,525 401,480 415,440 428,419 440,424 453,437 466,463 480,466 493,437 505,385 518,368 531,388 544,438 557,502 571,568 583,608 597,625 610,610 622,545 636,475 649,393 662,303 676,250 689,255 702,276 715,283 728,260 741,238 754,240 767,232 780,236 793,280 806,324 820,349 833,345 846,310 859,268 872,251 885,268 897,280 910,303 924,314 937,327 950,355 963,356 976,375 990,408 1003,457 1016,475 1028,485 1042,475 1055,425 1068,360 1081,328 1094,333 1107,355 1120,385 1133,408 1146,465 1159,525 1172,590 1185,669 1198,677 1211,628 1224,560 1237,468 1250,395 1264,305 1277,241 1290,252 1303,273 1317,301 1342,310 1355,340 1368,352 1381,358 1394,382 1407,408 1420,455 1433,500 1446,540 1459,578 1473,591 1486,572 1498,543']
    ],
    cci: [
      ['#00bfff', 2, '22,340 36,405 48,737 61,640 74,657 87,577 100,697 113,577 126,525 139,415 152,487 165,460 179,442 192,432 205,305 218,383 231,400 244,411 257,452 270,482 284,487 296,547 309,433 322,478 336,695 348,600 361,450 374,398 388,272 401,272 414,320 427,324 440,375 453,442 466,472 480,395 493,397 506,458 518,470 531,440 545,487 558,502 571,587 584,830 597,677 610,535 623,727 636,742 649,732 662,617 675,628 688,718 701,655 714,608 728,608 741,530 754,373 767,322 780,311 793,358 806,332 820,366 832,367 845,427 858,416 871,442 884,460 897,510 910,625 923,567 937,563 950,602 963,640 975,671 989,672 1002,733 1016,682 1028,675 1041,678 1054,618 1080,625 1094,572 1107,572 1120,535 1132,335 1146,436 1159,416 1172,432 1186,432 1198,402 1212,447 1224,442 1237,370 1250,527 1266,527 1277,521 1290,558 1303,623 1315,490 1328,572 1342,403 1355,372 1368,460 1381,622 1394,607 1407,533 1420,568 1433,734 1447,630 1459,345 1472,233 1486,197 1499,315 1512,375 1525,375 1538,410 1551,367 1562,380',
        '0,398 10,416 22,416 35,443 48,600 61,700 74,793 87,735 100,683 113,613 126,594 140,628 153,605 166,543 179,522 192,475 205,362 218,375 231,360 244,440 257,460 270,484 284,390 296,235 310,315 322,457 335,492 348,632 362,694 375,637 388,579 401,575 412,564 428,564 441,540 453,502 466,538 480,516 493,425 505,193 518,208 531,237 545,328 558,423 571,458 583,474 597,528 607,524 623,528 636,620 649,540 662,392 676,325 689,342 702,430 715,393 728,338 741,375 754,329 767,329 780,353 793,387 806,412 820,466 833,449 846,425 859,390 872,338 885,346 897,391 910,404 923,378 937,424 950,408 963,375 976,346 989,415 1002,352 1015,360 1028,490 1042,538 1055,412 1068,365 1080,289 1094,298 1107,379 1120,355 1132,313 1146,377 1159,378 1172,485 1185,605 1198,692 1211,693 1224,614 1237,618 1250,550 1264,475 1277,423 1290,392 1303,422 1315,423 1329,388 1342,416 1368,421 1381,393 1394,378 1407,402 1433,402 1446,467 1459,493 1472,535 1486,482 1498,488'],
      ['#f00', 1, '22,380 35,432 48,655 61,583 74,611 87,553 100,655 113,540 126,405 139,307 152,430 166,415 179,430 192,447 205,264 218,416 231,443 244,465 257,533 270,587 284,603 296,647 309,418 322,460 336,735 348,560 361,409 374,408 388,335 401,352 414,397 427,386 440,415 453,515 466,617 480,398 493,400 506,532 518,523 531,460 545,520 558,563 571,650 584,795 597,625 610,502 623,650 636,683 649,678 662,560 675,580 688,705 701,625 714,547 728,560 741,440 754,303 767,347 780,387 793,422 806,376 820,381 832,376 845,487 858,445 871,522 884,625 897,675 910,719 923,580 937,543 950,578 963,618 975,667 989,653 1002,695 1016,638 1028,625 1041,637 1054,568 1080,647 1094,483 1107,470 1120,390 1133,240 1146,435 1159,463 1172,490 1186,496 1198,438 1212,538 1224,430 1237,300 1250,602 1264,587 1277,553 1290,562 1303,610 1315,502 1328,540 1342,300 1355,332 1368,440 1381,620 1394,619 1407,548 1420,568 1433,677 1447,590 1459,277 1472,300 1486,320 1499,400 1512,434 1525,418 1538,449 1551,300 1562,360',
        '0,390 10,445 22,455 35,520 48,704 61,690 74,686 87,652 100,617 113,556 126,529 140,643 153,590 166,400 179,406 192,375 205,335 218,408 231,413 244,515 257,560 270,608 284,410 296,240 310,390 322,500 335,532 348,625 362,671 375,610 388,557 401,542 414,495 428,452 441,380 453,300 466,508 480,516 493,425 506,270 518,313 531,338 545,398 558,482 571,533 583,580 597,668 610,605 623,590 636,692 649,500 662,276 676,328 689,380 702,465 715,443 728,362 741,395 754,325 767,350 780,392 793,433 806,463 820,575 833,552 846,425 859,348 872,315 885,398 897,448 910,455 923,393 937,479 950,385 963,317 976,330 989,470 1002,388 1015,403 1028,582 1042,650 1055,460 1068,390 1080,310 1094,360 1107,440 1120,416 1132,330 1146,400 1159,408 1172,580 1185,704 1198,697 1211,637 1224,565 1237,571 1250,470 1264,335 1277,341 1290,372 1303,430 1315,446 1329,405 1342,445 1355,427 1368,412 1381,328 1394,344 1407,437 1420,455 1433,452 1446,570 1459,687 1472,655 1486,520 1498,505']
    ]
  };
  const line = (svg, pts, stroke, w) => add(svg, 'polyline', {points: pts, fill: 'none', stroke, 'stroke-width': w, 'vector-effect': 'non-scaling-stroke', 'shape-rendering': 'crispEdges'});
  for (const id in series) {
    const svg = document.getElementById(id);
    for (const [color, w, a, b] of series[id]) {
      const shifted = b.split(' ').map(p => { const [x, y] = p.split(','); return (+x + 1568) + ',' + y; }).join(' ');
      line(svg, a + ' ' + shifted, color, w);
    }
  }
  line(document.getElementById('aurum'), '23,505.5 3066,505.5', '#00bfff', 1);
  line(document.getElementById('aurum'), '23,508.5 3066,508.5', '#f00', 1);
  line(document.getElementById('cci'), '23,511 3070,511', '#fff', 1);

  // Time axis: one label every 8 bars (40 minutes)
  const times = document.getElementById('times');
  for (let i = 0; i < 30; i++) {
    const min = 22 * 60 + 50 + 40 * i, pad = n => String(n).padStart(2, '0');
    const s = document.createElement('span');
    s.textContent = i ? `${11 + Math.floor(min / 1440)} Jul ${pad(Math.floor(min / 60) % 24)}:${pad(min % 60)}` : '11 Jul 2022';
    times.append(s);
  }
</script>
</body>
</html>
